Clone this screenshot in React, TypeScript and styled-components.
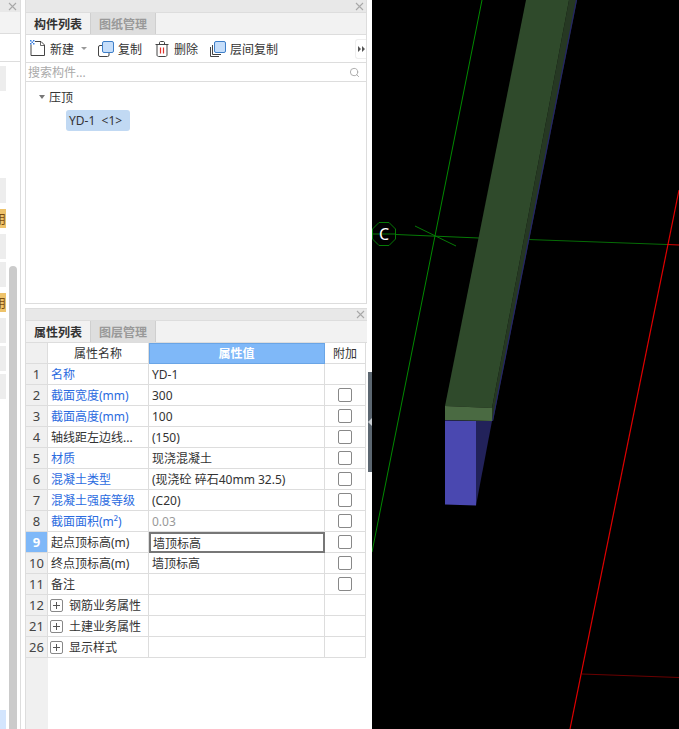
import { Search } from 'lucide-react';
import styled, { createGlobalStyle } from 'styled-components';

const GlobalStyle = createGlobalStyle`
  html, body {
    margin: 0;
    padding: 0;
    background: #fff;
  }
  * {
    box-sizing: border-box;
  }
`;

type Row = {
  no: number;
  name: string;
  value: string;
  blue?: boolean;
  muted?: boolean;
  check?: boolean;
  active?: boolean;
  group?: boolean;
};

const rows: Row[] = [
  { no: 1, name: '名称', value: 'YD-1', blue: true },
  { no: 2, name: '截面宽度(mm)', value: '300', blue: true, check: true },
  { no: 3, name: '截面高度(mm)', value: '100', blue: true, check: true },
  { no: 4, name: '轴线距左边线...', value: '(150)', check: true },
  { no: 5, name: '材质', value: '现浇混凝土', blue: true, check: true },
  { no: 6, name: '混凝土类型', value: '(现浇砼 碎石40mm 32.5)', blue: true, check: true },
  { no: 7, name: '混凝土强度等级', value: '(C20)', blue: true, check: true },
  { no: 8, name: '截面面积(m²)', value: '0.03', blue: true, muted: true, check: true },
  { no: 9, name: '起点顶标高(m)', value: '墙顶标高', check: true, active: true },
  { no: 10, name: '终点顶标高(m)', value: '墙顶标高', check: true },
  { no: 11, name: '备注', value: '', check: true },
  { no: 12, name: '钢筋业务属性', value: '', group: true },
  { no: 21, name: '土建业务属性', value: '', group: true },
  { no: 26, name: '显示样式', value: '', group: true },
];

const sideItems = [
  { gap: 4, height: 25 },
  { gap: 87, height: 25 },
  { gap: 6, height: 19, tag: true },
  { gap: 6, height: 25 },
  { gap: 3, height: 25 },
  { gap: 6, height: 19, tag: true },
  { gap: 6, height: 25 },
  { gap: 3, height: 25 },
  { gap: 3, height: 25 },
];

const CloseIcon = () => (
  <svg width="9" height="9" viewBox="0 0 9 9">
    <path d="M1 1l7 7M8 1L1 8" stroke="#a8a8a8" strokeWidth="1.1" fill="none" />
  </svg>
);

const NewIcon = () => (
  <svg width="16" height="17" viewBox="0 0 16 17">
    <path d="M1 4.5V15.5H14.5V5L11 1.5H5" fill="#fff" stroke="#444" strokeWidth="1" />
    <path d="M10.5 1.5V5.5H14.5" fill="none" stroke="#444" strokeWidth="0.8" />
    <path d="M0 0h1.5v1.5H0zM3 0h1.5v1.5H3zM1.5 1.5H3V3H1.5zM0 3h1.5v1.5H0zM3 3h1.5v1.5H3z" fill="#3a7fe0" />
  </svg>
);

const CopyIcon = () => (
  <svg width="16" height="16" viewBox="0 0 16 16">
    <rect x="0.5" y="4.5" width="10.5" height="11" rx="1.5" fill="#fff" stroke="#444" />
    <rect x="4.5" y="0.5" width="11" height="11" rx="1.5" fill="#c6defa" stroke="#3f7fc8" />
  </svg>
);

const TrashIcon = () => (
  <svg width="15" height="16" viewBox="0 0 15 16">
    <path d="M0.5 3.5H13.5M4.5 3.5V1.5C4.5 1 5 0.5 5.5 0.5H8.5C9 0.5 9.5 1 9.5 1.5V3.5" fill="none" stroke="#444" />
    <path d="M2 3.5V14C2 14.8 2.7 15.5 3.5 15.5H10.5C11.3 15.5 12 14.8 12 14V3.5" fill="none" stroke="#444" />
    <path d="M5.5 6.5V12.5M8.5 6.5V12.5" stroke="#e0322c" strokeWidth="1.2" />
  </svg>
);

const LayerCopyIcon = () => (
  <svg width="16" height="16" viewBox="0 0 16 16">
    <path d="M0.5 6V15.5H9" fill="none" stroke="#444" />
    <path d="M2.5 4V13.5H11" fill="none" stroke="#444" />
    <rect x="4.5" y="0.5" width="11" height="11" rx="1.5" fill="#c6defa" stroke="#3f7fc8" />
  </svg>
);

const Scene = () => (
  <SceneSvg viewBox="372 0 307 729">
    <path d="M482 0L372 552" stroke="#008a00" strokeWidth="1" fill="none" />
    <path d="M396 234.5L479 238" stroke="#067a06" strokeWidth="1" fill="none" />
    <path d="M528 239.5L667 244.5" stroke="#066c06" strokeWidth="1" fill="none" />
    <path d="M415 226L456 246" stroke="#067a06" strokeWidth="1" fill="none" />
    <path
      d="M379 222.5H389L395.5 229V239L389 245.5H379L372.5 239V229Z"
      stroke="#067a06"
      strokeWidth="1"
      fill="#000"
    />
    <path d="M372.5 234H396" stroke="#067a06" strokeWidth="1" fill="none" />
    <text x="384" y="240" fill="#fff" fontSize="16" textAnchor="middle" fontFamily="'Noto Sans', sans-serif">
      C
    </text>
    <path d="M679 190L570 729" stroke="#e00000" strokeWidth="1.2" fill="none" />
    <path d="M667 244.5L679 245" stroke="#e00000" strokeWidth="1" fill="none" />
    <path d="M582 674L679 677.5" stroke="#6a0000" strokeWidth="1" fill="none" />
    <path d="M569 0H577L493 421H492L492 408Z" fill="#263823" />
    <path d="M576.5 0L492.5 421" stroke="#24246a" strokeWidth="1.2" fill="none" />
    <path d="M526 0H569L492 408L445 406Z" fill="#2f4a2b" />
    <path d="M445 406L492 408V421L445 420Z" fill="#4a6a42" />
    <path d="M445 420.5L476 421V505.5L445 504.5Z" fill="#4a48b0" />
    <path d="M476 421H492L476 505.5Z" fill="#22225a" />
  </SceneSvg>
);

const App = () => (
  <>
    <GlobalStyle />
    <Page>
      <Sidebar>
        <SideTitle>
          <CloseIcon />
        </SideTitle>
        <SideTools />
        <SideBlank />
        <SideBody>
          <SideList>
            {sideItems.map((item, index) => (
              <SideItem key={index} $gap={item.gap} $height={item.height} $tag={item.tag}>
                {item.tag ? '用' : ''}
              </SideItem>
            ))}
            <SideSelected />
          </SideList>
          <SideScrollbar />
        </SideBody>
      </Sidebar>

      <MainColumn>
        <TopPanel>
          <PanelTitle $height={12}>
            <CloseIcon />
          </PanelTitle>
          <Tabs>
            <Tab $active>构件列表</Tab>
            <Tab>图纸管理</Tab>
          </Tabs>
          <Toolbar>
            <ToolButton>
              <NewIcon />
              新建
            </ToolButton>
            <Caret />
            <ToolButton $offset={11}>
              <CopyIcon />
              复制
            </ToolButton>
            <ToolButton $offset={13}>
              <TrashIcon />
              删除
            </ToolButton>
            <ToolButton $offset={12}>
              <LayerCopyIcon />
              层间复制
            </ToolButton>
            <MoreButton>
              <svg width="7" height="6" viewBox="0 0 7 6">
                <path d="M0 0l3 3-3 3zM4 0l3 3-3 3z" fill="#555" />
              </svg>
            </MoreButton>
          </Toolbar>
          <SearchBar>
            <SearchText>搜索构件...</SearchText>
            <Search size={11} color="#a6a6a6" strokeWidth={2} />
          </SearchBar>
          <Tree>
            <TreeGroup>
              <TreeCaret />
              压顶
            </TreeGroup>
            <TreeChip>YD-1&nbsp; &lt;1&gt;</TreeChip>
          </Tree>
        </TopPanel>

        <BottomPanel>
          <PanelTitle $height={11}>
            <CloseIcon />
          </PanelTitle>
          <Tabs>
            <Tab $active>属性列表</Tab>
            <Tab>图层管理</Tab>
          </Tabs>
          <Grid>
            <GridRow>
              <IndexCell />
              <HeadCell>属性名称</HeadCell>
              <HeadCell $accent>属性值</HeadCell>
              <HeadCell>附加</HeadCell>
            </GridRow>
            {rows.map(row => (
              <GridRow key={row.no}>
                <IndexCell $active={row.active}>{row.no}</IndexCell>
                <NameCell $blue={row.blue}>
                  {row.group && (
                    <PlusBox>
                      <svg width="7" height="7" viewBox="0 0 7 7">
                        <path d="M3.5 0V7M0 3.5H7" stroke="#555" strokeWidth="1" />
                      </svg>
                    </PlusBox>
                  )}
                  {row.name}
                </NameCell>
                <ValueCell $muted={row.muted} $active={row.active}>
                  {row.value}
                </ValueCell>
                <CheckCell>{row.check && <CheckBox />}</CheckCell>
              </GridRow>
            ))}
          </Grid>
        </BottomPanel>
      </MainColumn>

      <Gutter>
        <SplitHandle>
          <svg width="4" height="8" viewBox="0 0 4 8">
            <path d="M4 0L0 4l4 4z" fill="#c9ced3" />
          </svg>
        </SplitHandle>
      </Gutter>

      <Canvas>
        <Scene />
      </Canvas>
    </Page>
  </>
);

const Page = styled.div`
  display: flex;
  width: 679px;
  height: 729px;
  overflow: hidden;
  background: #fff;
  color: #333;
  font-family: 'Noto Sans', 'Noto Sans CJK SC', sans-serif;
  font-size: 12px;
`;

const Sidebar = styled.div`
  display: flex;
  flex-direction: column;
  flex: none;
  width: 21px;
  margin-right: 4px;
  border-right: 1px solid #ddd;
`;

const SideTitle = styled.div`
  display: flex;
  align-items: center;
  justify-content: flex-end;
  height: 12px;
  padding-right: 3px;
  overflow: hidden;
  background: #e8e8e8;
`;

const SideTools = styled.div`
  height: 22px;
  background: #f3f3f3;
  border-bottom: 1px solid #ddd;
`;

const SideBlank = styled.div`
  height: 28px;
  border-bottom: 1px solid #ddd;
`;

const SideBody = styled.div`
  display: flex;
  flex: 1;
  min-height: 0;
`;

const SideList = styled.div`
  display: flex;
  flex-direction: column;
  flex: none;
  width: 6px;
  margin-right: 3px;
`;

const SideItem = styled.div<{ $gap: number; $height: number; $tag?: boolean }>`
  display: flex;
  justify-content: flex-end;
  align-items: center;
  flex: none;
  height: ${props => props.$height}px;
  margin-top: ${props => props.$gap}px;
  overflow: hidden;
  background: ${props => (props.$tag ? '#eec36b' : '#ededed')};
  color: #7a4a10;
  font-size: 12px;
  white-space: nowrap;
`;

const SideSelected = styled.div`
  flex: none;
  height: 19px;
  margin-top: auto;
  background: #d3e5fd;
`;

const SideScrollbar = styled.div`
  flex: none;
  width: 8px;
  margin-top: 204px;
  background: #cbcbcb;
  border-radius: 4px 4px 0 0;
`;

const MainColumn = styled.div`
  display: flex;
  flex-direction: column;
  flex: none;
  width: 343px;
`;

const TopPanel = styled.div`
  display: flex;
  flex-direction: column;
  flex: none;
  width: 342px;
  height: 304px;
  border: 1px solid #ddd;
  border-top: 0;
`;

const BottomPanel = styled.div`
  display: flex;
  flex-direction: column;
  flex: 1;
  width: 342px;
  margin-top: 4px;
  border-left: 1px solid #ddd;
  border-top: 1px solid #ddd;
`;

const PanelTitle = styled.div<{ $height: number }>`
  display: flex;
  align-items: center;
  justify-content: flex-end;
  flex: none;
  height: ${props => props.$height}px;
  padding-right: 2px;
  background: #e8e8e8;
`;

const Tabs = styled.div`
  display: flex;
  flex: none;
  height: 23px;
  background: #f2f2f2;
  border-top: 1px solid #ddd;
  border-bottom: 1px solid #ddd;
`;

const Tab = styled.div<{ $active?: boolean }>`
  display: flex;
  align-items: center;
  justify-content: center;
  width: 65px;
  font-weight: 700;
  color: ${props => (props.$active ? '#333' : '#999')};
  background: ${props => (props.$active ? '#f2f2f2' : '#dedede')};
  border-right: 1px solid #cfcfcf;
`;

const Toolbar = styled.div`
  display: flex;
  align-items: center;
  flex: none;
  height: 28px;
  padding-left: 4px;
  border-bottom: 1px solid #ddd;
`;

const ToolButton = styled.div<{ $offset?: number }>`
  display: flex;
  align-items: center;
  gap: 4px;
  flex: none;
  margin-left: ${props => props.$offset ?? 0}px;
  white-space: nowrap;
`;

const Caret = styled.span`
  flex: none;
  width: 0;
  height: 0;
  margin-left: 7px;
  border-left: 3px solid transparent;
  border-right: 3px solid transparent;
  border-top: 3px solid #999;
`;

const MoreButton = styled.div`
  display: flex;
  align-items: center;
  justify-content: center;
  width: 11px;
  height: 20px;
  margin-left: auto;
  border: 1px solid #eee;
  border-right: 0;
  border-radius: 3px 0 0 3px;
`;

const SearchBar = styled.div`
  display: flex;
  align-items: center;
  justify-content: space-between;
  flex: none;
  height: 19px;
  padding: 0 6px 0 2px;
  border-bottom: 1px solid #ddd;
`;

const SearchText = styled.span`
  color: #aaa;
`;

const Tree = styled.div`
  display: flex;
  flex-direction: column;
  flex: 1;
  align-items: flex-start;
  padding-top: 5px;
`;

const TreeGroup = styled.div`
  display: flex;
  align-items: center;
  height: 20px;
  padding-left: 13px;
  gap: 4px;
`;

const TreeCaret = styled.span`
  width: 0;
  height: 0;
  border-left: 3px solid transparent;
  border-right: 3px solid transparent;
  border-top: 4px solid #777;
`;

const TreeChip = styled.div`
  display: flex;
  align-items: center;
  width: 64px;
  height: 21px;
  margin: 3px 0 0 40px;
  padding-left: 3px;
  background: #c1d9f3;
  border-radius: 3px;
  white-space: nowrap;
`;

const Grid = styled.div`
  flex: 1;
  background: linear-gradient(to right, #f0f0f0 22px, #fff 22px);
`;

const GridRow = styled.div`
  display: grid;
  grid-template-columns: 22px 101px 176px 41px;
  width: 340px;
  height: 21px;
`;

const Cell = styled.div`
  display: flex;
  align-items: center;
  min-width: 0;
  overflow: hidden;
  white-space: nowrap;
  border-right: 1px solid #ddd;
  border-bottom: 1px solid #ddd;
`;

const IndexCell = styled(Cell)<{ $active?: boolean }>`
  justify-content: center;
  font-size: 13px;
  font-weight: ${props => (props.$active ? 700 : 400)};
  color: ${props => (props.$active ? '#fff' : '#444')};
  background: ${props => (props.$active ? '#7fb8f8' : '#f0f0f0')};
`;

const HeadCell = styled(Cell)<{ $accent?: boolean }>`
  justify-content: center;
  font-weight: ${props => (props.$accent ? 700 : 400)};
  color: ${props => (props.$accent ? '#fff' : '#333')};
  background: ${props => (props.$accent ? '#7fb8f8' : '#fff')};
  border-color: ${props => (props.$accent ? '#6aa5e6' : '#ddd')};
  box-shadow: ${props => (props.$accent ? 'inset 1px 1px 0 #6aa5e6' : 'none')};
`;

const NameCell = styled(Cell)<{ $blue?: boolean }>`
  padding-left: 3px;
  color: ${props => (props.$blue ? '#2b6be0' : '#333')};
`;

const ValueCell = styled(Cell)<{ $muted?: boolean; $active?: boolean }>`
  padding-left: ${props => (props.$active ? '2px' : '3px')};
  color: ${props => (props.$muted ? '#999' : '#333')};
  border: ${props => (props.$active ? '2px solid #777' : undefined)};
`;

const CheckCell = styled(Cell)`
  justify-content: center;
`;

const CheckBox = styled.span`
  width: 14px;
  height: 14px;
  background: #fff;
  border: 1px solid #888;
  border-radius: 2px;
`;

const PlusBox = styled.span`
  display: inline-flex;
  align-items: center;
  justify-content: center;
  flex: none;
  width: 13px;
  height: 13px;
  margin: 0 6px 0 -1px;
  border: 1px solid #888;
  border-radius: 2px;
`;

const Gutter = styled.div`
  flex: none;
  width: 4px;
  padding-top: 372px;
`;

const SplitHandle = styled.div`
  display: flex;
  align-items: center;
  justify-content: center;
  height: 100px;
  background: #5c6771;
`;

const Canvas = styled.div`
  flex: 1;
  min-width: 0;
  background: #000;
`;

const SceneSvg = styled.svg`
  display: block;
  width: 307px;
  height: 729px;
`;

export default App;
